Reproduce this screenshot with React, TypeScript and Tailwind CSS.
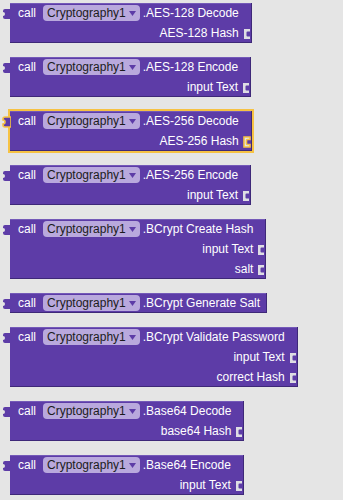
const PURPLE = '#5d3ca7';
const BG = '#e5e5e5';

type Block = { name: string; inputs: string[]; selected?: boolean };

const blocks: Block[] = [
  { name: '.AES-128 Decode', inputs: ['AES-128 Hash'] },
  { name: '.AES-128 Encode', inputs: ['input Text'] },
  { name: '.AES-256 Decode', inputs: ['AES-256 Hash'], selected: true },
  { name: '.AES-256 Encode', inputs: ['input Text'] },
  { name: '.BCrypt Create Hash', inputs: ['input Text', 'salt'] },
  { name: '.BCrypt Generate Salt', inputs: [] },
  { name: '.BCrypt Validate Password', inputs: ['input Text', 'correct Hash'] },
  { name: '.Base64 Decode', inputs: ['base64 Hash'] },
  { name: '.Base64 Encode', inputs: ['input Text'] },
];

function OutputTab({ selected }: { selected?: boolean }) {
  return (
    <svg width="9" height="12" viewBox="-1 -1 9 12" className="absolute left-[-8px] top-[5px]">
      <path
        d="M8 0 H2 Q0 0 0 2 V3 Q2 3 2 5 Q2 7 0 7 V8 Q0 10 2 10 H8 Z"
        fill={PURPLE}
        stroke={selected ? '#f6c243' : 'none'}
        strokeWidth={selected ? 1.6 : 0}
      />
    </svg>
  );
}

function Socket({ selected }: { selected?: boolean }) {
  return (
    <svg width="8" height="12" viewBox="-1 -1 8 12" className="absolute right-[-12px] top-[5px]">
      <path
        d="M0 0 H6 V2.5 H3.5 Q2.5 2.5 2.5 3.5 V6.5 Q2.5 7.5 3.5 7.5 H6 V10 H0 Z"
        fill={selected ? BG : '#dedde3'}
        stroke={selected ? '#f6c243' : 'none'}
        strokeWidth={selected ? 1.6 : 0}
      />
    </svg>
  );
}

function CallBlock({ block }: { block: Block }) {
  const hasInputs = block.inputs.length > 0;
  return (
    <div
      className={
        'relative flex w-fit flex-col bg-[#5d3ca7] pl-[8px] text-[12px] text-white shadow-[inset_0_-1px_0_#3e2878,inset_-1px_0_0_#3e2878,inset_0_1px_0_#7459b8] ' +
        (hasInputs ? 'pr-[13px] ' : 'pr-[7px] ') +
        (block.selected ? 'outline-2 outline-[#f6c243]' : '')
      }
    >
      <OutputTab selected={block.selected} />
      <div className="flex h-5 items-center">
        <span>call</span>
        <span className="ml-[7px] inline-flex h-4 items-center rounded-[4px] bg-[#b9a9dd] pl-1 pr-[4px] text-[#1c1c1c]">
          Cryptography1
          <svg width="7" height="5" viewBox="0 0 7 5" className="ml-[3px]">
            <path d="M0 0 H7 L3.5 5 Z" fill="#5d3ca7" />
          </svg>
        </span>
        <span className="ml-[3px]">{block.name}</span>
      </div>
      {block.inputs.map((label) => (
        <div key={label} className="relative flex h-5 items-center justify-end">
          <span>{label}</span>
          <Socket selected={block.selected} />
        </div>
      ))}
    </div>
  );
}

export default function App() {
  return (
    <div
      className="flex min-h-screen flex-col items-start gap-[14px] bg-[#e5e5e5] pl-[10px] pt-[3px]"
      style={{ fontFamily: '"Liberation Sans", Arial, sans-serif' }}
    >
      {blocks.map((b) => (
        <CallBlock key={b.name} block={b} />
      ))}
    </div>
  );
}
